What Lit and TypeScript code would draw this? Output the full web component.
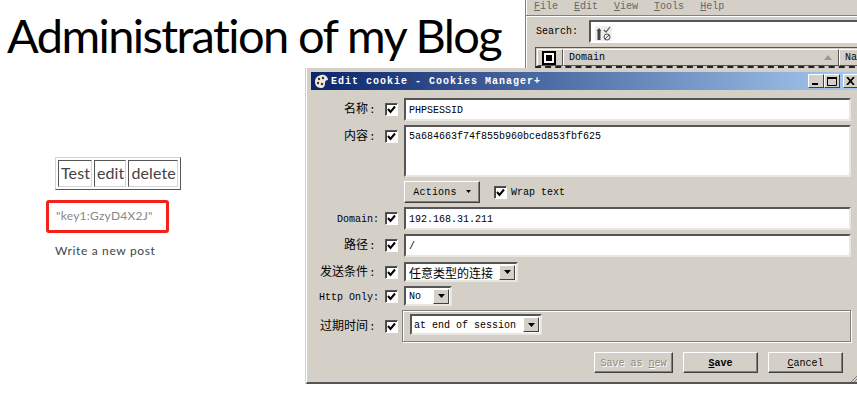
import { LitElement, html, css } from 'lit';
import { customElement } from 'lit/decorators.js';

const check = html`<span class="check"><svg width="9" height="9" viewBox="0 0 9 9"><path d="M1 4 L3.5 7 L8 1.5" fill="none" stroke="#000" stroke-width="2"/></svg></span>`;

const dropArrow = html`<span class="drop"><svg width="7" height="4" viewBox="0 0 7 4"><path d="M0 0 H7 L3.5 4 Z" fill="#000"/></svg></span>`;

@customElement('app-root')
export class AppRoot extends LitElement {
    static styles = css`
        :host {
            display: block;
            position: relative;
            width: 857px;
            height: 406px;
            overflow: hidden;
            background: #fff;
            font-family: "Liberation Mono", monospace;
        }

        /* blog page */
        .blog {
            font-family: "Lato", sans-serif;
        }

        h1 {
            margin: 0;
            padding: 4px 0 0 7px;
            height: 69px;
            box-sizing: border-box;
            font-size: 47px;
            line-height: 62px;
            font-weight: 400;
            letter-spacing: -1.6px;
            color: #000;
            white-space: nowrap;
        }

        .posts {
            padding: 88px 0 0 55px;
        }

        .post-table {
            display: inline-flex;
            gap: 2px;
            padding: 2px;
            border: 1px solid;
            border-color: #d4d4d4 #555 #555 #d4d4d4;
            height: 27px;
        }

        .post-table span {
            display: block;
            padding: 0 1px 0 2px;
            border: 1px solid;
            border-color: #555 #d4d4d4 #d4d4d4 #555;
            font-size: 16px;
            line-height: 24px;
            letter-spacing: 0.1px;
            color: #444;
        }

        .key {
            width: 123px;
            height: 33px;
            box-sizing: border-box;
            margin: 10px 0 0 -9px;
            padding-left: 7px;
            border: 3px solid #f5201a;
            border-radius: 3px;
            font-size: 12px;
            line-height: 26px;
            letter-spacing: 0.25px;
            color: #888;
            white-space: nowrap;
        }

        .write {
            margin-top: 9px;
            font-size: 12px;
            line-height: 18px;
            letter-spacing: 0.65px;
            color: #444;
        }

        /* windows */
        .win {
            position: absolute;
            box-sizing: border-box;
            background: #d4d0c8;
            color: #000;
        }

        .back {
            left: 525px;
            top: -4px;
            width: 340px;
            height: 76px;
            border-left: 1px solid #808080;
            box-shadow: inset 1px 0 0 #fff;
            padding: 4px 0 0 3px;
        }

        .menu {
            display: flex;
            gap: 16px;
            height: 16px;
            box-sizing: border-box;
            margin-left: -3px;
            padding: 0 0 0 8px;
            border-bottom: 1px solid #808080;
            box-shadow: 0 1px 0 #fff;
            font-size: 10px;
            line-height: 14px;
            color: #666;
        }

        u {
            text-underline-offset: 1px;
        }

        .search {
            display: flex;
            align-items: center;
            margin-top: 4px;
            height: 23px;
            font-size: 10px;
        }

        .search label {
            width: 60px;
            padding-left: 7px;
            box-sizing: border-box;
        }

        .search-box {
            flex: 1;
            height: 23px;
            box-sizing: border-box;
            padding: 4px 0 0 4px;
            background: #fff;
            border: 2px solid;
            border-color: #555 #fff #fff #555;
        }

        .icon-tile {
            display: block;
            width: 17px;
            height: 15px;
            background: #eee;
        }

        .cols {
            display: flex;
            height: 21px;
            box-sizing: border-box;
            margin: 4px 0 0 6px;
            padding: 1px;
            border: 1px solid #555;
            border-bottom: 2px dashed #222;
            font-size: 10px;
        }

        .col {
            display: flex;
            align-items: center;
            box-sizing: border-box;
            height: 17px;
            border: 1px solid;
            border-color: #fff #555 #555 #fff;
            padding-left: 5px;
        }

        .col-pick {
            width: 26px;
            padding-left: 6px;
        }

        .pick {
            display: block;
            width: 6px;
            height: 6px;
            background: #000;
            border: 2px solid #fff;
            outline: 2px solid #000;
        }

        .col-domain {
            width: 276px;
            justify-content: space-between;
            padding-right: 6px;
        }

        .front {
            left: 306px;
            top: 68px;
            width: 560px;
            height: 316px;
            padding: 3px 0 0 4px;
            border-top: 1px solid #d4d0c8;
            border-bottom: 2px solid #555;
            border-left: 1px solid #fff;
            box-shadow: -1px 0 0 #d4d0c8;
        }

        .title {
            display: flex;
            align-items: center;
            width: 547px;
            height: 18px;
            padding: 0 0 0 3px;
            box-sizing: border-box;
            background: linear-gradient(90deg, #0a246a 0%, #a6caf0 100%);
            color: #fff;
            font-weight: 700;
            font-size: 10px;
            letter-spacing: 1px;
            white-space: nowrap;
        }

        .title-text {
            flex: 1;
            margin-left: 2px;
        }

        .ctrls {
            display: flex;
        }

        .ctrl {
            display: flex;
            align-items: center;
            justify-content: center;
            box-sizing: border-box;
            width: 16px;
            height: 14px;
            background: #d4d0c8;
            border: 1px solid;
            border-color: #fff #404040 #404040 #fff;
        }

        .ctrl:last-child {
            width: 15px;
            margin-left: 3px;
        }

        .form {
            display: grid;
            grid-template-columns: 68px 25px 447px;
            padding: 8px 0 0 0;
            row-gap: 4px;
            font-size: 10px;
        }

        .lab {
            justify-self: end;
            display: flex;
            align-items: center;
            box-sizing: border-box;
            height: 23px;
            padding-top: 2px;
            font-size: 12px;
            line-height: 21px;
            font-family: "Liberation Mono", "Noto Sans CJK SC", monospace;
            white-space: nowrap;
        }

        .lab.latin {
            font-size: 10px;
        }

        .lab i {
            font-style: normal;
            width: 11px;
            padding-left: 1px;
            box-sizing: border-box;
            font-size: 11px;
        }

        .lab.latin i {
            width: 6px;
            padding-left: 0;
            font-size: 10px;
        }

        .cb {
            display: flex;
            align-items: center;
            height: 23px;
            padding-left: 6px;
        }

        .check {
            display: flex;
            align-items: center;
            justify-content: center;
            box-sizing: border-box;
            width: 13px;
            height: 13px;
            background: #fff;
            border: 1px solid;
            border-color: #555 #fff #fff #555;
            box-shadow: inset 1px 1px 0 #404040;
        }

        .field {
            box-sizing: border-box;
            height: 23px;
            padding: 0 3px;
            background: #fff;
            border: 2px solid;
            border-color: #555 #e8e6e0 #e8e6e0 #555;
            font-size: 10px;
            line-height: 21px;
            white-space: nowrap;
        }

        .area {
            height: 52px;
            line-height: 19px;
        }

        .actions-row {
            grid-column: 3;
            display: flex;
            align-items: center;
            height: 22px;
        }

        .btn {
            display: flex;
            align-items: center;
            justify-content: center;
            box-sizing: border-box;
            padding-top: 1px;
            background: #d4d0c8;
            border: 1px solid;
            border-color: #fff #404040 #404040 #fff;
            box-shadow: inset -1px -1px 0 #808080;
            font-size: 10px;
        }

        .actions {
            width: 76px;
            height: 22px;
            gap: 9px;
            letter-spacing: 0.2px;
        }

        .actions svg {
            margin-bottom: 3px;
        }

        .wrap {
            display: flex;
            align-items: center;
            gap: 4px;
            margin-left: 14px;
        }

        .sel {
            display: inline-flex;
            align-items: center;
            justify-content: space-between;
            box-sizing: border-box;
            padding: 0 1px 0 3px;
            background: #fff;
            border: 2px solid;
            border-color: #555 #e8e6e0 #e8e6e0 #555;
            white-space: nowrap;
        }

        .sel span:first-child {
            padding-top: 1px;
        }

        .drop {
            display: flex;
            align-items: center;
            justify-content: center;
            box-sizing: border-box;
            width: 16px;
            height: 15px;
            background: #d4d0c8;
            border: 1px solid;
            border-color: #fff #404040 #404040 #fff;
        }

        .sel-row {
            height: 20px;
        }

        .lab.sel-row,
        .cb.sel-row {
            height: 20px;
        }

        .sel-send {
            width: 114px;
            font-family: "Noto Sans CJK SC", sans-serif;
            font-size: 12px;
        }

        .sel-http {
            width: 48px;
        }

        .lab.expire-lab,
        .cb.expire-lab {
            height: 32px;
        }

        .group {
            box-sizing: border-box;
            height: 32px;
            margin-left: -2px;
            width: 449px;
            padding: 3px 0 0 7px;
            border: 1px solid #808080;
            box-shadow: 1px 1px 0 #fff, inset 1px 1px 0 #fff;
        }

        .sel-exp {
            width: 132px;
            height: 21px;
            padding-left: 2px;
        }

        .buttons {
            display: flex;
            justify-content: flex-end;
            gap: 10px;
            width: 532px;
            margin-top: 10px;
        }

        .buttons .btn {
            width: 75px;
            height: 21px;
        }

        .buttons .save-new {
            width: 79px;
            color: #888;
            text-shadow: 1px 1px 0 #fff;
        }

        .buttons .save {
            font-weight: 700;
        }

        .grip {
            position: absolute;
            left: 543px;
            bottom: 0;
        }
    `;

    render() {
        return html`
            <div class="blog">
                <h1>Administration of my Blog</h1>
                <div class="posts">
                    <div class="post-table">
                        <span>Test</span><span>edit</span><span>delete</span>
                    </div>
                    <div class="key">"key1:GzyD4X2J"</div>
                    <div class="write">Write a new post</div>
                </div>
            </div>

            <div class="win back">
                <div class="menu">
                    <span><u>F</u>ile</span>
                    <span><u>E</u>dit</span>
                    <span><u>V</u>iew</span>
                    <span><u>T</u>ools</span>
                    <span><u>H</u>elp</span>
                </div>
                <div class="search">
                    <label>Search:</label>
                    <div class="search-box">
                        <svg class="icon-tile" viewBox="0 0 17 15">
                            <path d="M4 4 V14" stroke="#444" stroke-width="3"/>
                            <path d="M1.5 5 L4 2 L6.5 5 Z" fill="#444"/>
                            <path d="M9 4 L11 6 L15 1" fill="none" stroke="#555" stroke-width="1.2"/>
                            <circle cx="12" cy="11" r="3" fill="none" stroke="#555"/>
                            <path d="M10 13 L14 9" stroke="#555"/>
                        </svg>
                    </div>
                </div>
                <div class="cols">
                    <div class="col col-pick"><span class="pick"></span></div>
                    <div class="col col-domain">
                        <span>Domain</span>
                        <svg width="8" height="5" viewBox="0 0 8 5"><path d="M0 5 L4 0 L8 5 Z" fill="#999"/></svg>
                    </div>
                    <div class="col">Na</div>
                </div>
            </div>

            <div class="win front">
                <div class="title">
                    <svg width="15" height="15" viewBox="0 0 15 15">
                        <path d="M7 1 C11 0 14 3 14 6 C12 6 11 7 11 9 C11 12 10 14 7 14 C3 14 1 11 1 8 C1 4 3 2 7 1 Z" fill="#f0e8d8"/>
                        <circle cx="5" cy="5" r="1.2" fill="#333"/>
                        <circle cx="9" cy="4" r="1.2" fill="#333"/>
                        <circle cx="4" cy="9" r="1.2" fill="#333"/>
                        <circle cx="8" cy="10" r="1.2" fill="#333"/>
                    </svg>
                    <span class="title-text">Edit cookie - Cookies Manager+</span>
                    <div class="ctrls">
                        <span class="ctrl"><svg width="8" height="8" viewBox="0 0 8 8"><path d="M0 7 H6" stroke="#000" stroke-width="2"/></svg></span>
                        <span class="ctrl"><svg width="10" height="9" viewBox="0 0 10 9"><path d="M.5 1 H9.5 V8.5 H.5 Z" fill="none" stroke="#000"/><path d="M0 1 H10" stroke="#000" stroke-width="2"/></svg></span>
                        <span class="ctrl"><svg width="9" height="8" viewBox="0 0 9 8"><path d="M1 0 L8 8 M8 0 L1 8" stroke="#000" stroke-width="1.8"/></svg></span>
                    </div>
                </div>

                <div class="form">
                    <div class="lab">名称<i>:</i></div>
                    <div class="cb">${check}</div>
                    <div class="field">PHPSESSID</div>

                    <div class="lab" style="align-self:start">内容<i>:</i></div>
                    <div class="cb" style="align-self:start">${check}</div>
                    <div class="field area">5a684663f74f855b960bced853fbf625</div>

                    <div class="actions-row">
                        <div class="btn actions">
                            Actions
                            <svg width="5" height="3" viewBox="0 0 5 3"><path d="M0 0 H5 L2.5 3 Z" fill="#000"/></svg>
                        </div>
                        <div class="wrap">${check}<span>Wrap text</span></div>
                    </div>

                    <div class="lab latin">Domain<i>:</i></div>
                    <div class="cb">${check}</div>
                    <div class="field">192.168.31.211</div>

                    <div class="lab">路径<i>:</i></div>
                    <div class="cb">${check}</div>
                    <div class="field">/</div>

                    <div class="lab sel-row" style="margin-top:1px">发送条件<i>:</i></div>
                    <div class="cb sel-row" style="margin-top:1px">${check}</div>
                    <div style="margin-top:1px"><div class="sel sel-row sel-send"><span>任意类型的连接</span>${dropArrow}</div></div>

                    <div class="lab latin sel-row">Http Only<i>:</i></div>
                    <div class="cb sel-row">${check}</div>
                    <div><div class="sel sel-row sel-http"><span>No</span>${dropArrow}</div></div>

                    <div class="lab expire-lab">过期时间<i>:</i></div>
                    <div class="cb expire-lab">${check}</div>
                    <div class="group">
                        <div class="sel sel-exp"><span>at end of session</span>${dropArrow}</div>
                    </div>
                </div>

                <div class="buttons">
                    <div class="btn save-new"><span>Save as <u>n</u>ew</span></div>
                    <div class="btn save"><span><u>S</u>ave</span></div>
                    <div class="btn"><span><u>C</u>ancel</span></div>
                </div>

                <svg class="grip" width="8" height="8" viewBox="0 0 8 8">
                    <path d="M1 8 L8 1 M4 8 L8 4 M7 8 L8 7" stroke="#808080"/>
                </svg>
            </div>
        `;
    }
}
